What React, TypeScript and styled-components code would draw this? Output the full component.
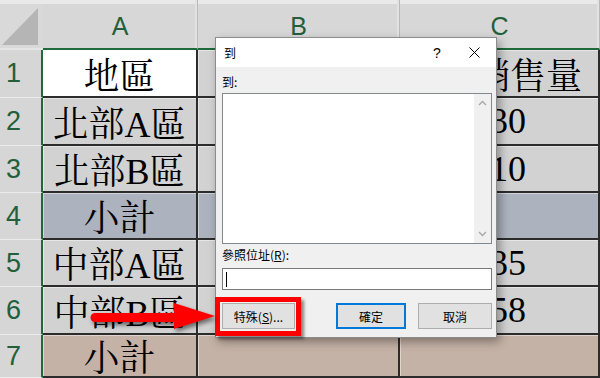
import React from "react";
import styled, { createGlobalStyle } from "styled-components";

type Tone = "white" | "gray" | "blue" | "brown";

interface RowData {
  n: number;
  a: string;
  c: string;
  tone: Tone;
  aTone?: Tone;
}

const tones: Record<Tone, string> = {
  white: "#ffffff",
  gray: "#d2d2d2",
  blue: "#acb2be",
  brown: "#c5b2a6",
};

const rows: RowData[] = [
  { n: 1, a: "地區", c: "銷售量", tone: "gray", aTone: "white" },
  { n: 2, a: "北部A區", c: "230", tone: "gray" },
  { n: 3, a: "北部B區", c: "210", tone: "gray" },
  { n: 4, a: "小計", c: "", tone: "blue" },
  { n: 5, a: "中部A區", c: "135", tone: "gray" },
  { n: 6, a: "中部B區", c: "158", tone: "gray" },
  { n: 7, a: "小計", c: "", tone: "brown" },
];

const GlobalStyle = createGlobalStyle`
  html, body {
    margin: 0;
    padding: 0;
    width: 600px;
    height: 378px;
    overflow: hidden;
    background: #c5b2a6;
  }
`;

const Sheet = styled.div`
  position: relative;
  width: 600px;
  height: 378px;
  overflow: hidden;
  display: grid;
  grid-template-columns: 43px 155px 202px 200px;
  grid-template-rows: 50px 48px 48px 47px 47px 47px 48px 43px;
  background: #d6d6d6;
`;

const Corner = styled.div`
  position: relative;
  box-sizing: border-box;
  background: linear-gradient(#e9e9e9 0 4px, #d9d9d9 4px);
  border-bottom: 2px solid #e4e4e4;

  &::after {
    content: "";
    position: absolute;
    left: 2px;
    top: 8px;
    width: 36px;
    height: 37px;
    background: #b5b5b5;
    clip-path: polygon(0 100%, 100% 0, 100% 100%);
  }
`;

const ColHeader = styled.div`
  box-sizing: border-box;
  display: flex;
  align-items: center;
  justify-content: center;
  padding-top: 4px;
  background: linear-gradient(#e9e9e9 0 4px, #d7d7d7 4px);
  border-bottom: 2px solid #1f6a3b;
  border-right: 1px solid #b9b9b9;
  box-shadow: inset -2px 0 0 #e2e2e2;
  font-family: "Liberation Sans", Arial, sans-serif;
  font-size: 25px;
  color: #225f3a;
`;

const RowHeader = styled.div`
  box-sizing: border-box;
  display: flex;
  align-items: center;
  padding-left: 6px;
  background: #d6d6d6;
  border-right: 2px solid #1f6a3b;
  border-bottom: 1px solid #ececec;
  font-family: "Liberation Sans", Arial, sans-serif;
  font-size: 27px;
  color: #225f3a;
`;

const Cell = styled.div<{ $bg: string; $end?: boolean }>`
  box-sizing: border-box;
  display: flex;
  align-items: center;
  justify-content: ${(p) => (p.$end ? "flex-end" : "center")};
  padding-right: ${(p) => (p.$end ? "16px" : "0")};
  background: ${(p) => p.$bg};
  border-right: 2px solid #2c2c2c;
  border-bottom: 2px solid #2c2c2c;
  box-shadow: inset 1px 1px 0 rgba(255, 255, 255, 0.45);
  font-family: "Liberation Serif", "Noto Serif CJK TC", "Noto Sans CJK TC", serif;
  font-size: 36px;
  color: #000;
  white-space: nowrap;
  overflow: hidden;
`;

const Dialog = styled.div`
  position: absolute;
  left: 215px;
  top: 37px;
  width: 282px;
  height: 301px;
  box-sizing: border-box;
  border: 1px solid #8c8c8c;
  background: #f0f0f0;
  box-shadow: 3px 4px 9px rgba(0, 0, 0, 0.35);
  display: flex;
  flex-direction: column;
  font-family: "Noto Sans CJK TC", "Liberation Sans", sans-serif;
  font-size: 12px;
  color: #000;
`;

const TitleBar = styled.div`
  height: 29px;
  background: #fff;
  display: flex;
  align-items: center;
  padding-left: 8px;
`;

const Title = styled.span`
  flex: 1;
`;

const TitleButton = styled.div<{ $w: number }>`
  width: ${(p) => p.$w}px;
  height: 29px;
  display: flex;
  align-items: center;
  justify-content: center;
  font-family: "Liberation Sans", Arial, sans-serif;
  font-size: 14px;
`;

const Body = styled.div`
  flex: 1;
  display: flex;
  flex-direction: column;
  padding: 8px 4px 0 6px;
`;

const Label = styled.div<{ $top?: number }>`
  line-height: 14px;
  margin-top: ${(p) => p.$top ?? 0}px;
`;

const ListBox = styled.div`
  margin-top: 4px;
  height: 151px;
  box-sizing: border-box;
  border: 1px solid #828790;
  background: #fff;
  display: flex;
  justify-content: flex-end;
`;

const ScrollBar = styled.div`
  width: 17px;
  background: #f0f0f0;
  display: flex;
  flex-direction: column;
  justify-content: space-between;
  align-items: center;
  padding: 6px 0;
`;

const Input = styled.div`
  margin-top: 6px;
  height: 22px;
  box-sizing: border-box;
  border: 1px solid #7a7a7a;
  background: #fff;
  display: flex;
  align-items: center;
  padding-left: 3px;
`;

const Caret = styled.span`
  width: 1px;
  height: 15px;
  background: #000;
`;

const Buttons = styled.div`
  margin-top: 13px;
  display: flex;
  gap: 12px;
`;

const Button = styled.div<{ $w: number; $primary?: boolean; $push?: boolean }>`
  width: ${(p) => p.$w}px;
  height: 26px;
  box-sizing: border-box;
  margin-left: ${(p) => (p.$push ? "auto" : "0")};
  display: flex;
  align-items: center;
  justify-content: center;
  background: #e1e1e1;
  border: 1px solid ${(p) => (p.$primary ? "#0078d7" : "#adadad")};
  box-shadow: ${(p) => (p.$primary ? "inset 0 0 0 1px #0078d7" : "none")};
`;

const Highlight = styled.div`
  position: absolute;
  left: 215px;
  top: 297px;
  width: 86px;
  height: 39px;
  box-sizing: border-box;
  border: 5px solid #ff0000;
  box-shadow: 3px 3px 3px rgba(0, 0, 0, 0.45);
`;

const Arrow = styled.svg`
  position: absolute;
  left: 88px;
  top: 298px;
  overflow: visible;
  filter: drop-shadow(2px 3px 2px rgba(0, 0, 0, 0.5));
`;

const Chevron = ({ up }: { up?: boolean }) => (
  <svg width="9" height="6" viewBox="0 0 9 6">
    <path
      d={up ? "M1 5 L4.5 1.5 L8 5" : "M1 1 L4.5 4.5 L8 1"}
      fill="none"
      stroke="#a6a6a6"
      strokeWidth="1.3"
    />
  </svg>
);

export default function App() {
  return (
    <>
      <GlobalStyle />
      <Sheet>
        <Corner />
        <ColHeader>A</ColHeader>
        <ColHeader>B</ColHeader>
        <ColHeader>C</ColHeader>
        {rows.map((r) => (
          <React.Fragment key={r.n}>
            <RowHeader>{r.n}</RowHeader>
            <Cell $bg={tones[r.aTone ?? r.tone]}>{r.a}</Cell>
            <Cell $bg={tones[r.tone]} />
            <Cell $bg={tones[r.tone]} $end={r.n === 1}>
              {r.c}
            </Cell>
          </React.Fragment>
        ))}

        <Dialog>
          <TitleBar>
            <Title>到</Title>
            <TitleButton $w={30}>?</TitleButton>
            <TitleButton $w={44}>
              <svg width="11" height="11" viewBox="0 0 11 11">
                <path d="M0.5 0.5 L10.5 10.5 M10.5 0.5 L0.5 10.5" stroke="#000" strokeWidth="1" />
              </svg>
            </TitleButton>
          </TitleBar>
          <Body>
            <Label>到:</Label>
            <ListBox>
              <ScrollBar>
                <Chevron up />
                <Chevron />
              </ScrollBar>
            </ListBox>
            <Label $top={4}>
              參照位址(<u>R</u>):
            </Label>
            <Input>
              <Caret />
            </Input>
            <Buttons>
              <Button $w={73}>
                特殊(<u>S</u>)...
              </Button>
              <Button $w={70} $primary $push>
                確定
              </Button>
              <Button $w={74}>取消</Button>
            </Buttons>
          </Body>
        </Dialog>

        <Highlight />
        <Arrow width="130" height="40" viewBox="0 0 130 40">
          <path
            d="M7 15 L86 15 L86 5 L127 18 L86 31 L86 24 L7 24 A4.5 4.5 0 0 1 7 15 Z"
            fill="#ff0000"
          />
        </Arrow>
      </Sheet>
    </>
  );
}
